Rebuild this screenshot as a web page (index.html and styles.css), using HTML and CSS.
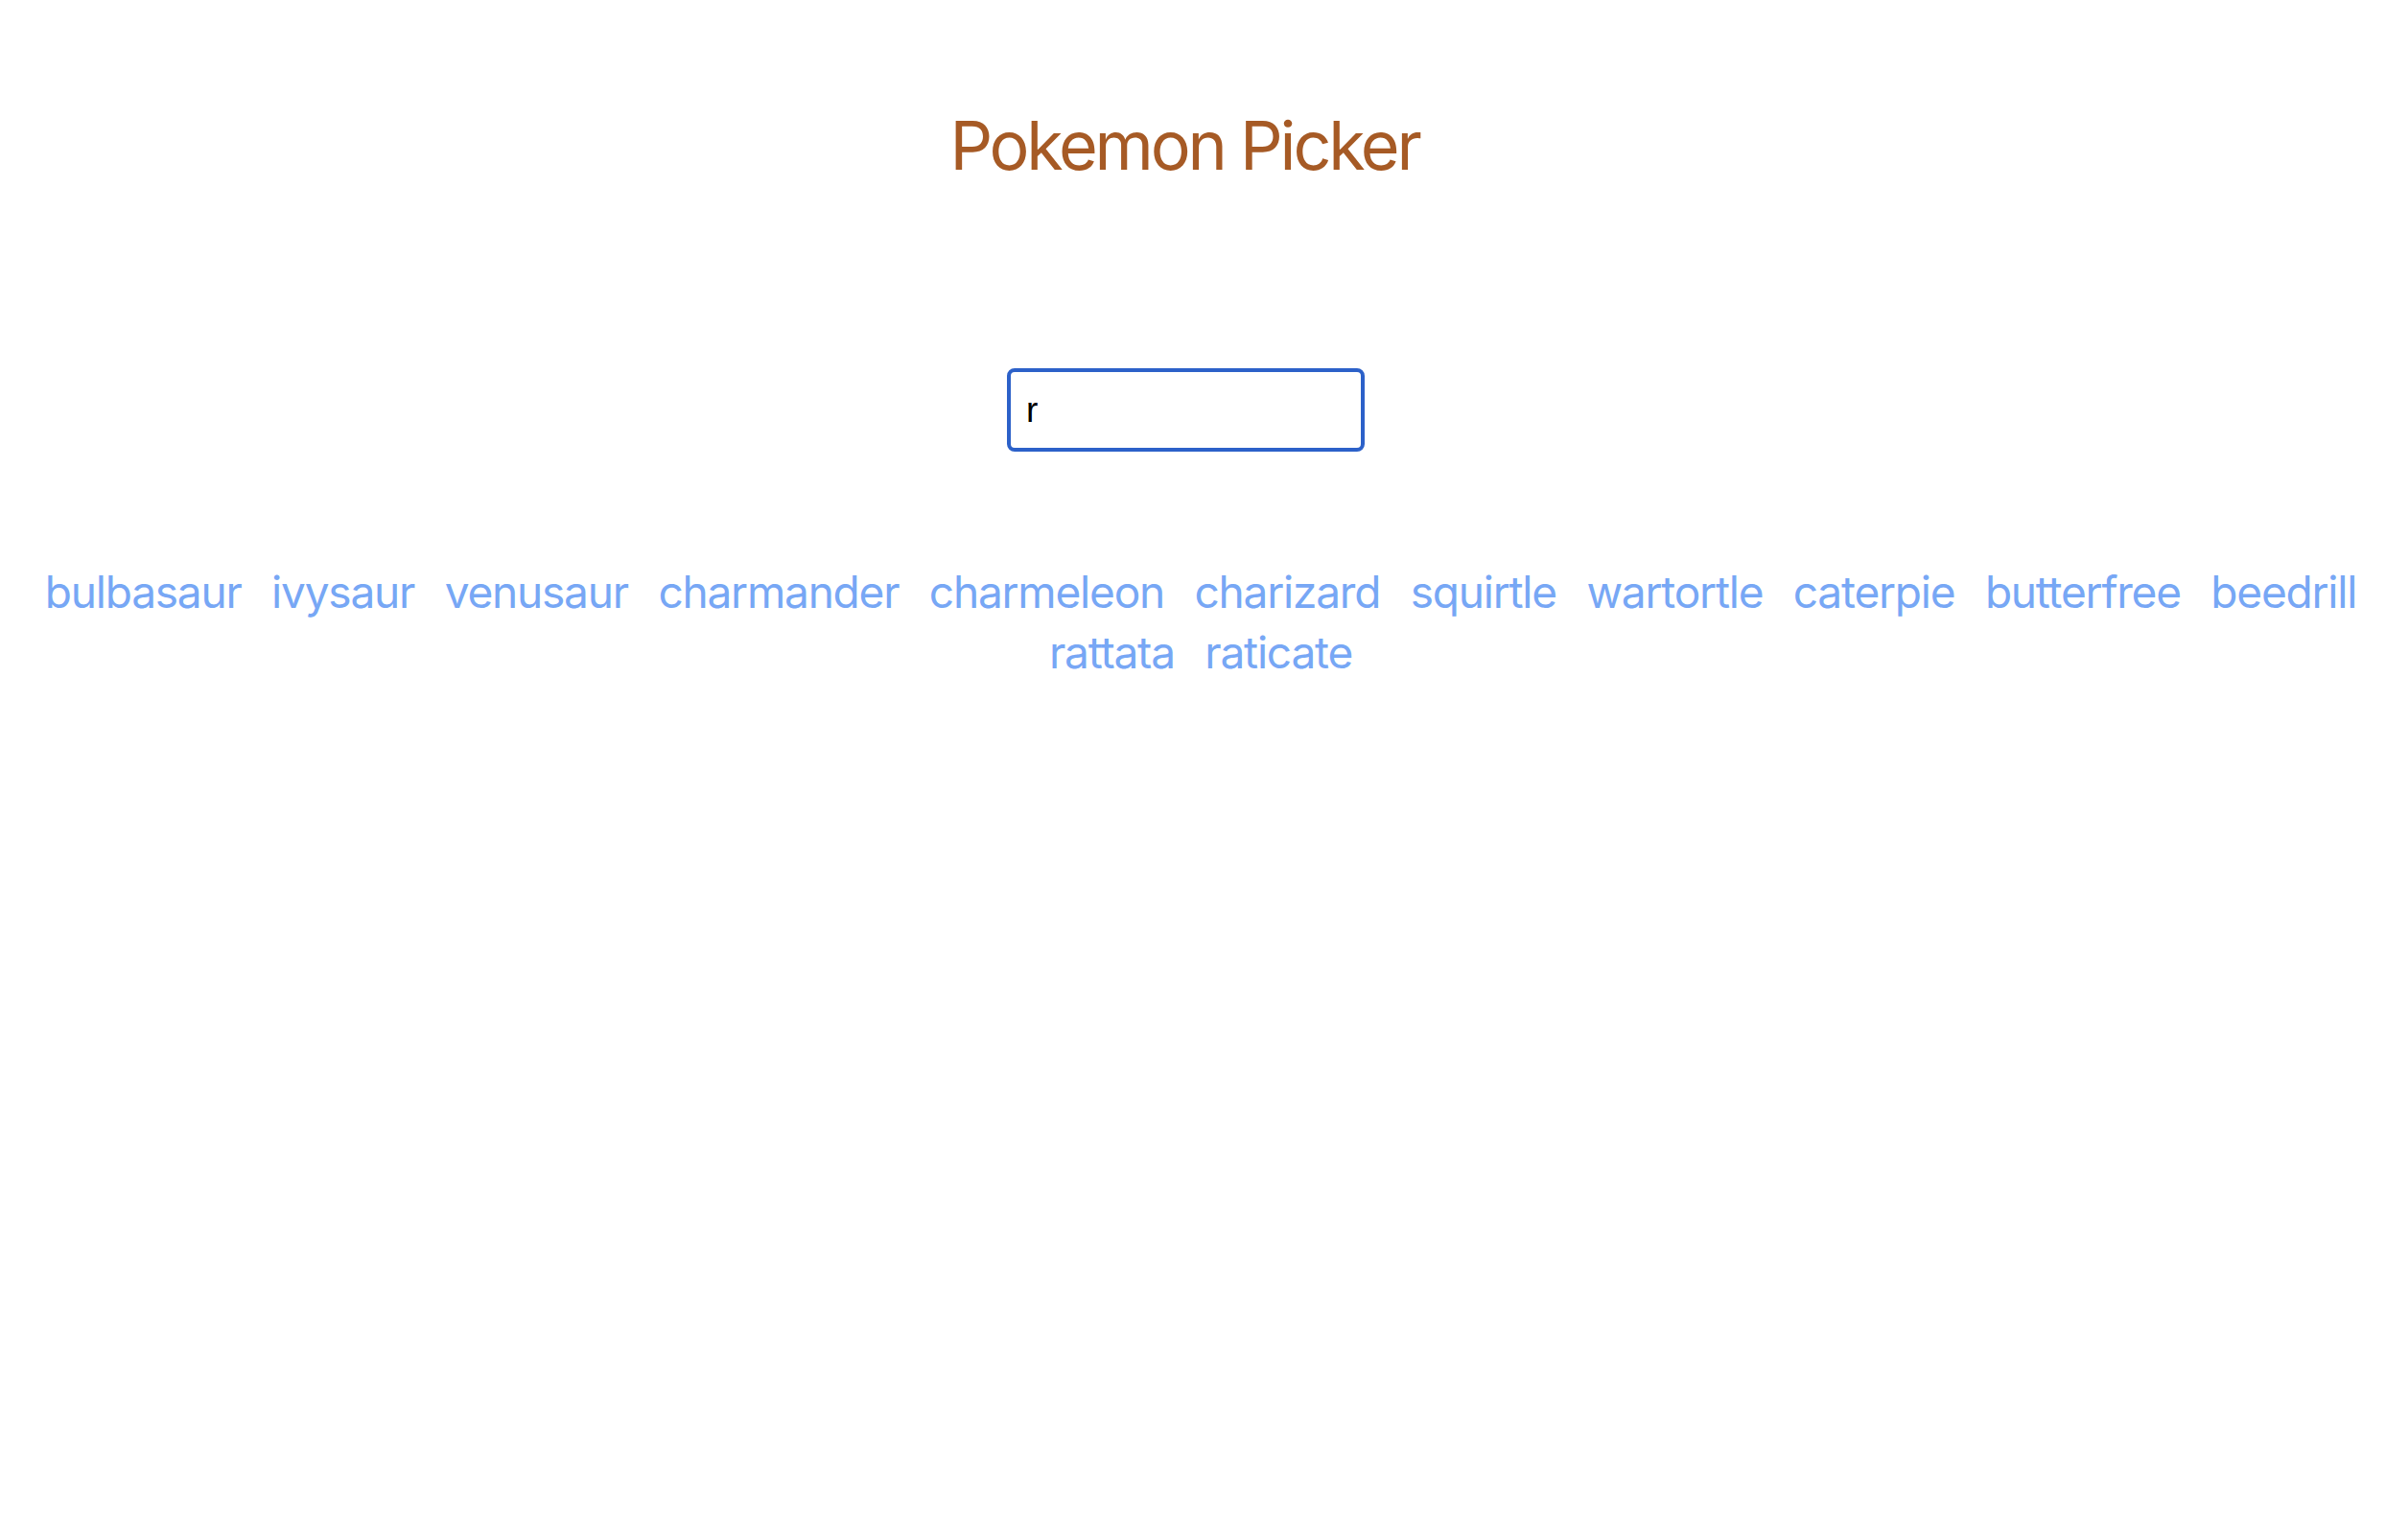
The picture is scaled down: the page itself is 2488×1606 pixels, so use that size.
FILE: index.html
```html
<!DOCTYPE html>
<html lang="en">
<head>
<meta charset="utf-8">
<title>Pokemon Picker</title>
<link rel="stylesheet" href="styles.css">
</head>
<body>
<main class="app">
  <h1 class="title">Pokemon Picker</h1>
  <div class="search-row">
    <input class="search" type="text" value="r" autofocus>
  </div>
  <ul class="names">
    <li class="name">bulbasaur</li>
    <li class="name">ivysaur</li>
    <li class="name">venusaur</li>
    <li class="name">charmander</li>
    <li class="name">charmeleon</li>
    <li class="name">charizard</li>
    <li class="name">squirtle</li>
    <li class="name">wartortle</li>
    <li class="name">caterpie</li>
    <li class="name">butterfree</li>
    <li class="name">beedrill</li>
    <li class="name">rattata</li>
    <li class="name">raticate</li>
  </ul>
</main>
</body>
</html>
```
FILE: styles.css
```css
html, body {
  margin: 0;
  padding: 0;
  background: #ffffff;
}

body {
  font-family: Inter, "Noto Sans", sans-serif;
}

.app {
  display: flex;
  flex-direction: column;
}

.title {
  margin: 0;
  padding-top: 117px;
  padding-right: 18px;
  font-size: 70px;
  line-height: 1;
  font-weight: 400;
  letter-spacing: -3.2px;
  text-align: center;
  color: #a65a25;
}

.search-row {
  display: flex;
  justify-content: center;
  margin-top: 197px;
  padding-right: 15px;
}

.search {
  box-sizing: border-box;
  width: 373px;
  height: 87px;
  border: 4px solid #2c61c9;
  border-radius: 8px;
  padding: 0 16px;
  font-family: "Liberation Sans", Arial, sans-serif;
  font-size: 37px;
  color: #000000;
  outline: none;
  background: #ffffff;
}

.names {
  list-style: none;
  margin: 115px 0 0;
  padding: 0 0 0 16px;
  display: flex;
  flex-wrap: wrap;
  justify-content: center;
  column-gap: 31.5px;
  font-size: 46px;
  line-height: 63px;
  letter-spacing: -1.2px;
  color: #77a7f5;
}

.name {
  margin: 0;
}
```
